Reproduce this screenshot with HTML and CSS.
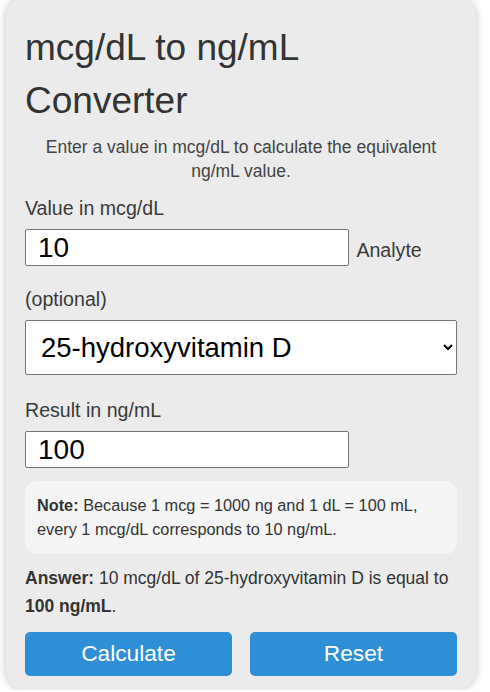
FILE: index.html
```html
<!DOCTYPE html>
<html lang="en">

<head>
  <meta charset="UTF-8">
  <meta name="viewport" content="width=device-width, initial-scale=1.0">
  <title>mcg/dL to ng/mL Converter</title>
  <link rel="stylesheet" href="styles.css">
</head>

<body>
  <!-- converter card -->
  <div class="converter">
    <h1 class="title">mcg/dL to ng/mL Converter</h1>
    <p class="intro">Enter a value in mcg/dL to calculate the equivalent ng/mL value.</p>

    <label class="field-label" for="inputValue">Value in mcg/dL</label>
    <div class="field-row">
      <input type="text" id="inputValue" class="field-input" value="10">
      <label for="analyte">Analyte (optional)</label>
    </div>
    <select id="analyte" class="field-select">
      <option>25-hydroxyvitamin D</option>
      <option>Vitamin B12</option>
      <option>Folate</option>
    </select>

    <label class="field-label result-label" for="resultValue">Result in ng/mL</label>
    <input type="text" id="resultValue" class="field-input result-input" value="100" readonly>

    <div class="note">
      <strong>Note:</strong> Because 1 mcg = 1000 ng and 1 dL = 100 mL, every 1 mcg/dL corresponds to 10 ng/mL.
    </div>

    <p class="answer" id="answer"><strong>Answer:</strong> 10 mcg/dL of 25-hydroxyvitamin D is equal to <strong>100 ng/mL</strong>.</p>

    <div class="actions">
      <button type="button" id="calcBtn">Calculate</button>
      <button type="button" id="resetBtn">Reset</button>
    </div>
  </div>

  <script>
    // 1 mcg/dL = 10 ng/mL
    function calculate() {
      const value = parseFloat(document.getElementById('inputValue').value);
      const analyte = document.getElementById('analyte').value;
      if (isNaN(value)) return;
      const result = value * 10;
      document.getElementById('resultValue').value = result;
      document.getElementById('answer').innerHTML =
        `<strong>Answer:</strong> ${value} mcg/dL of ${analyte} is equal to <strong>${result} ng/mL</strong>.`;
    }

    document.getElementById('calcBtn').addEventListener('click', calculate);
    document.getElementById('resetBtn').addEventListener('click', () => {
      document.getElementById('inputValue').value = '';
      document.getElementById('resultValue').value = '';
      document.getElementById('answer').textContent = '';
    });
  </script>
</body>

</html>
```

FILE: styles.css
```css
/* base */
body {
  margin: 0;
  font-family: "Liberation Sans", Arial, sans-serif;
  color: #333;
  background: #fff;
}

/* card */
.converter {
  box-sizing: border-box;
  width: 470px;
  margin: -3px 0 0 6px;
  padding: 24px 19px 14px;
  background: #eaebea;
  border-radius: 20px;
  box-shadow: 0 0 8px rgba(0, 0, 0, 0.25);
}

.title {
  margin: 0;
  font-size: 37px;
  font-weight: normal;
  line-height: 53px;
  color: #333;
}

.intro {
  margin: 8px 0 0;
  text-align: center;
  font-size: 17.5px;
  line-height: 24px;
  color: #444;
}

/* fields */
.field-label {
  display: block;
  margin-top: 12px;
  font-size: 19.6px;
  line-height: 27.4px;
  color: #3a3a3a;
}

.field-row {
  margin-top: 7px;
  font-size: 19.6px;
  line-height: 27.4px;
  color: #3a3a3a;
}

.field-input {
  box-sizing: border-box;
  width: 324px;
  height: 37px;
  margin: 0 3px 20px 0;
  padding: 0 12px;
  border: 1px solid #767676;
  border-radius: 2px;
  background: #fff;
  font-family: inherit;
  font-size: 28px;
  color: #000;
}

.field-select {
  display: block;
  box-sizing: border-box;
  width: 100%;
  height: 55px;
  margin-top: 6px;
  padding: 0 11px;
  border: 1px solid #767676;
  border-radius: 2px;
  background: #fff;
  font-family: inherit;
  font-size: 27.5px;
  color: #000;
}

.result-label {
  margin-top: 22px;
}

.result-input {
  display: block;
  margin: 7px 0 0;
}

/* note + answer */
.note {
  margin-top: 13px;
  padding: 13px 12px;
  background: #f5f5f5;
  border-radius: 12px;
  font-size: 16.3px;
  line-height: 23.6px;
  color: #333;
}

.answer {
  margin: 11px 0 0;
  font-size: 17.5px;
  line-height: 27.7px;
  color: #333;
}

/* buttons */
.actions {
  display: grid;
  grid-template-columns: 1fr 1fr;
  gap: 18px;
  margin-top: 11px;
}

.actions button {
  height: 44px;
  border: none;
  border-radius: 5px;
  background: #2e8fd6;
  color: #fff;
  font-family: inherit;
  font-size: 22.7px;
  cursor: pointer;
}
```
